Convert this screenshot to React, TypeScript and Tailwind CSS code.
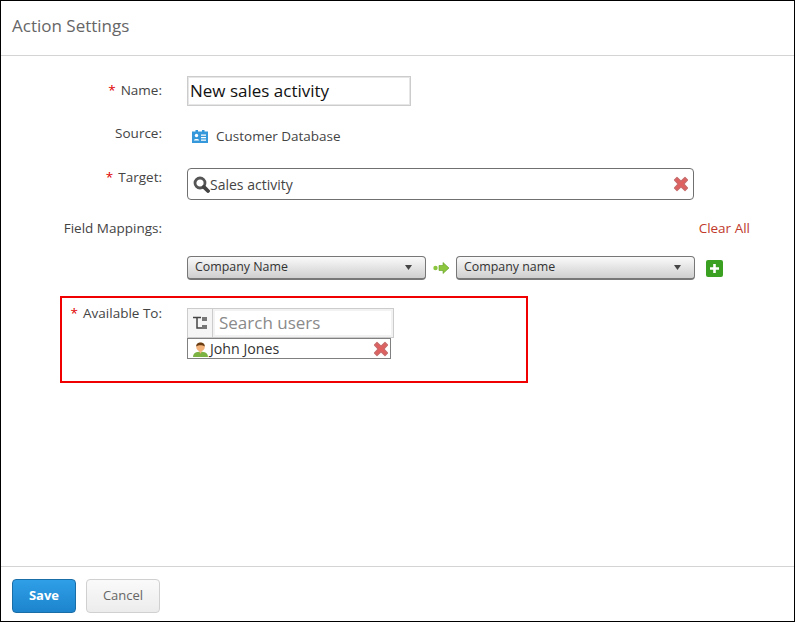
import { ReactNode } from 'react';

function RemoveIcon() {
  return (
    <svg width="16" height="16" viewBox="0 0 16 16" className="shrink-0">
      <path
        d="M1.5 4 4 1.500 8 5.200 12 1.500 14.500 4 10.800 8 14.500 12 12 14.500 8 10.800 4 14.500 1.500 12 5.200 8Z"
        fill="#e0605f"
        stroke="#c76a6a"
        strokeWidth="1.200"
        strokeLinejoin="round"
      />
    </svg>
  );
}

function Label({ children, required }: { children: ReactNode; required?: boolean }) {
  return (
    <div className="w-[161px] shrink-0 text-right text-[13.5px] leading-[18px] text-[#444]">
      {required && <span className="mr-[5px] text-[#e00000]">*</span>}
      {children}
    </div>
  );
}

function Select({ value }: { value: string }) {
  return (
    <div className="flex h-[24px] w-[239px] items-center justify-between rounded-[4px] border border-b-2 border-[#777] bg-gradient-to-b from-[#fafafa] to-[#cfcfcf] pl-[7px] pr-[13px] text-[12.4px] text-[#333]">
      <span>{value}</span>
      <svg width="7" height="5" viewBox="0 0 7 5">
        <path d="M0 0H7L3.500 5Z" fill="#444" />
      </svg>
    </div>
  );
}

export default function App() {
  return (
    <div className="flex h-[622px] w-[795px] flex-col border border-black bg-white font-['Open_Sans','Liberation_Sans',sans-serif]">
      <div className="h-[55px] shrink-0 border-b border-[#d4d4d4] pl-[11px] pt-[14px] text-[17px] leading-[22px] text-[#666]">
        Action Settings
      </div>

      <div className="flex-1">
        {/* Name */}
        <div className="mt-[20px] flex">
          <div className="pt-[5px]">
            <Label required>Name:</Label>
          </div>
          <div className="ml-[25px] flex h-[30px] w-[224px] items-center border-2 border-[#e6e6e6] px-[1px] text-[17px] text-[#111] outline outline-1 -outline-offset-1 outline-[#ccc]">
            New sales activity
          </div>
        </div>

        {/* Source */}
        <div className="mt-[18px] flex">
          <Label>Source:</Label>
          <div className="ml-[30px] flex items-center gap-[8px] pt-[3px] text-[13.5px] leading-[18px] text-[#444]">
            <svg width="16" height="13" viewBox="0 0 16 13">
              <path d="M0 1.500H3.500V0H6V1.500H10V0H12.500V1.500H16V13H0Z" fill="#3498db" />
              <circle cx="4.500" cy="5.500" r="1.700" fill="#fff" />
              <path d="M1.800 10.500C1.800 8.500 7.200 8.500 7.200 10.500Z" fill="#fff" />
              <path d="M9 4.500H14V5.700H9ZM9 7H14V8.200H9ZM9 9.500H14V10.700H9Z" fill="#fff" />
            </svg>
            Customer Database
          </div>
        </div>

        {/* Target */}
        <div className="mt-[23px] flex">
          <Label required>Target:</Label>
          <div className="ml-[25px] flex h-[32px] w-[507px] items-center rounded-[4px] border border-[#707070] pl-[5px] pr-[4px] text-[14px] text-[#444]">
            <svg width="17" height="17" viewBox="0 0 17 17" className="shrink-0">
              <circle cx="7" cy="7" r="5" fill="none" stroke="#555" strokeWidth="2.800" />
              <path d="M10.800 10.800 15 15" stroke="#444" strokeWidth="3.800" strokeLinecap="round" />
            </svg>
            <span className="flex-1">Sales activity</span>
            <RemoveIcon />
          </div>
        </div>

        {/* Field mappings */}
        <div className="mt-[19px] flex w-[749px] justify-between">
          <Label>Field Mappings:</Label>
          <button className="text-[13.5px] leading-[18px] text-[#c0392b]">Clear All</button>
        </div>
        <div className="ml-[186px] mt-[19px] flex items-center">
          <Select value="Company Name" />
          <svg width="16" height="12" viewBox="0 0 16 12" className="ml-[7px]">
            <circle cx="2.500" cy="6" r="2.200" fill="#8cc63f" />
            <path d="M6 3.500H10V0.500L16 6 10 11.500V8.500H6Z" fill="#8cc63f" stroke="#5e9e1e" strokeWidth="0.600" />
          </svg>
          <div className="ml-[7px]">
            <Select value="Company name" />
          </div>
          <div className="ml-[11px] flex h-[17px] w-[17px] items-center justify-center rounded-[2px] bg-[#3aa021]">
            <svg width="9" height="9" viewBox="0 0 9 9">
              <path d="M3.200 0H5.800V3.200H9V5.800H5.800V9H3.200V5.800H0V3.200H3.200Z" fill="#fff" />
            </svg>
          </div>
        </div>

        {/* Available to, highlighted in the picture */}
        <div className="ml-[59px] mt-[16px] h-[87px] w-[468px] border-2 border-[#f00000]">
          <div className="flex pt-[6px]">
            <div className="w-[100px] shrink-0 text-right text-[13.5px] leading-[18px] text-[#444]">
              <span className="mr-[5px] text-[#e00000]">*</span>
              Available To:
            </div>
            <div className="ml-[25px] mt-[4px]">
              <div className="flex h-[30px] w-[207px] border border-[#ccc]">
                <div className="flex w-[25px] shrink-0 items-center justify-center border-r border-[#ccc] bg-[#f5f5f5]">
                  <svg width="15" height="16" viewBox="0 0 15 16">
                    <path d="M0 2.500H8M4 2.500V13H9" stroke="#444" strokeWidth="1.500" fill="none" />
                    <rect x="9" y="2" width="5" height="4" fill="#777" />
                    <rect x="9" y="10" width="5" height="4" fill="#777" />
                  </svg>
                </div>
                <div className="flex flex-1 items-center border-2 border-[#f2f2f2] pl-[4px] text-[17px] text-[#8a8a8a]">
                  Search users
                </div>
              </div>
              <div className="flex h-[21px] w-[204px] items-center border border-[#808080] pl-[4px] pr-[1px] text-[14.2px] text-[#333]">
                <svg width="17" height="17" viewBox="0 0 16 16" className="shrink-0">
                  <path d="M1 16C1 12 4 11 8 11S15 12 15 16Z" fill="#7cb342" />
                  <circle cx="8" cy="6.500" r="4" fill="#f2b27a" />
                  <path d="M4 6C3.500 1 12.500 1 12 6 10 4.500 6 4.500 4 6Z" fill="#6b3d12" />
                  <path d="M6.500 10.500H9.500L8 13Z" fill="#f2b27a" />
                </svg>
                <span className="ml-px flex-1">John Jones</span>
                <RemoveIcon />
              </div>
            </div>
          </div>
        </div>
      </div>

      <div className="flex h-[55px] shrink-0 gap-[10px] border-t border-[#d4d4d4] pl-[11px] pt-[12px]">
        <button className="h-[34px] w-[64px] rounded-[4px] border border-[#1a6ea8] bg-gradient-to-b from-[#2f9fe8] to-[#1c84cc] text-[13px] font-bold text-white">
          Save
        </button>
        <button className="h-[34px] w-[74px] rounded-[4px] border border-[#d0d0d0] bg-gradient-to-b from-[#fafafa] to-[#ececec] text-[13px] text-[#666]">
          Cancel
        </button>
      </div>
    </div>
  );
}
